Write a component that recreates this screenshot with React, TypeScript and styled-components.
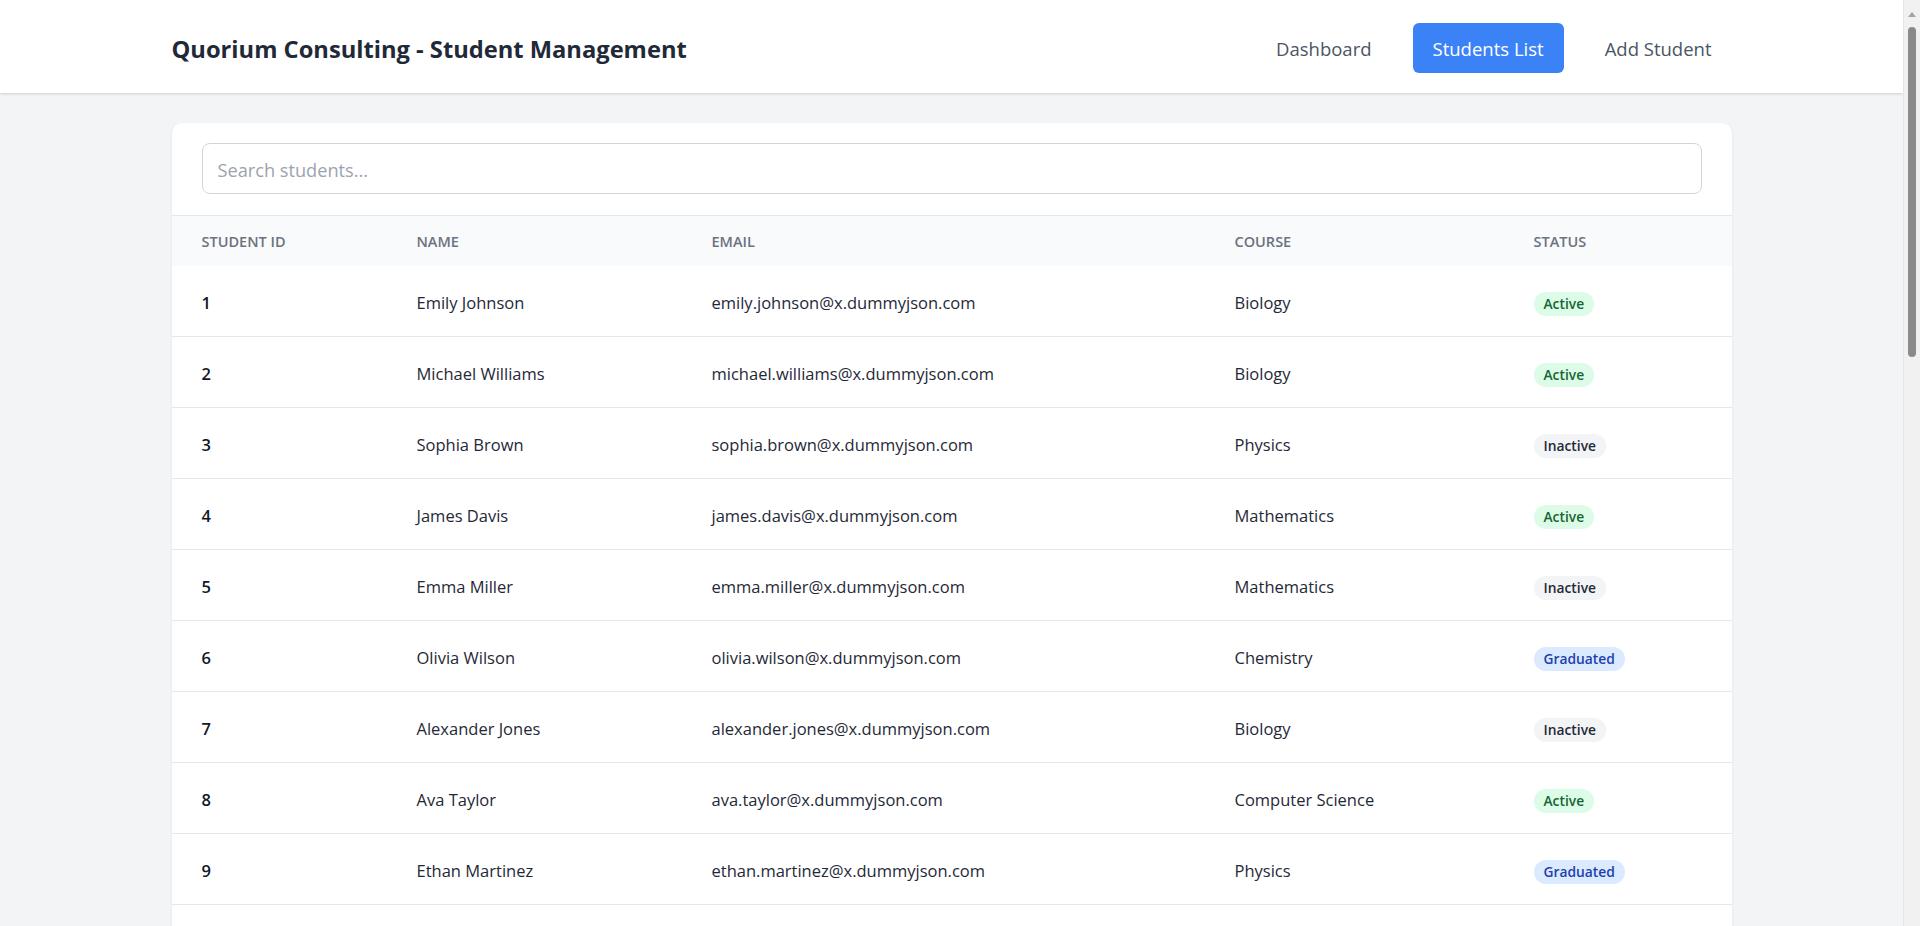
import React from 'react'
import styled, { createGlobalStyle } from 'styled-components'

const GlobalStyle = createGlobalStyle`
  * { box-sizing: border-box; }
  body {
    margin: 0;
    padding-right: 17px;
    background: #f3f4f6;
    font-family: "Open Sans", "Noto Sans", sans-serif;
    color: #1f2937;
  }
`

// stands in for the browser's vertical scrollbar seen in the screenshot
const ScrollTrack = styled.div`
  position: fixed;
  top: 0;
  right: 0;
  bottom: 0;
  width: 17px;
  background: #f1f1f1;
  border-left: 1px solid #e6e6e6;
`

const ScrollThumb = styled.div`
  position: absolute;
  top: 27px;
  left: 4px;
  width: 8px;
  height: 330px;
  border-radius: 4px;
  background: #8a8a8a;
`

const ScrollArrow = styled.div`
  position: absolute;
  top: 12px;
  left: 4px;
  width: 0;
  height: 0;
  border-left: 4.5px solid transparent;
  border-right: 4.5px solid transparent;
  border-bottom: 5px solid #a3a3a3;
`

const Header = styled.header`
  background: #ffffff;
  box-shadow: 0 1px 3px rgba(0, 0, 0, 0.1), 0 1px 2px rgba(0, 0, 0, 0.06);
`

const HeaderInner = styled.div`
  max-width: 1560px;
  margin: 0 auto;
  height: 93px;
  display: flex;
  align-items: center;
  justify-content: space-between;
`

const Title = styled.h1`
  margin: 0;
  font-size: 23.7px;
  font-weight: 700;
  color: #1f2937;
  padding-top: 5px;
`

const Nav = styled.nav`
  display: flex;
  gap: 21px;
  align-items: center;
  padding-top: 3px;
`

const NavLink = styled.a<{ $active?: boolean }>`
  display: block;
  padding: 1px 20px 0;
  height: 50px;
  line-height: 49px;
  border-radius: 6px;
  font-size: 18.5px;
  text-decoration: none;
  cursor: pointer;
  color: ${p => (p.$active ? '#ffffff' : '#4b5563')};
  background: ${p => (p.$active ? '#3b82f6' : 'transparent')};
`

const Main = styled.main`
  max-width: 1560px;
  margin: 30px auto;
`

const Card = styled.div`
  background: #ffffff;
  border-radius: 10px;
  box-shadow: 0 1px 3px rgba(0, 0, 0, 0.08);
  overflow: hidden;
`

const SearchWrap = styled.div`
  padding: 20px 30px 21px;
`

const SearchInput = styled.input`
  width: 100%;
  height: 51px;
  padding: 2px 15px 0;
  border: 1px solid #d1d5db;
  border-radius: 8px;
  font-family: inherit;
  font-size: 18.2px;
  color: #1f2937;
  outline: none;
  &::placeholder { color: #9ca3af; }
`

const Table = styled.table`
  width: 100%;
  border-collapse: collapse;
  table-layout: fixed;
  border-top: 1px solid #e5e7eb;
`

const Th = styled.th`
  height: 50px;
  padding: 2px 30px 0;
  text-align: left;
  font-size: 14.5px;
  font-weight: 600;
  text-transform: uppercase;
  color: #6b7280;
  background: #f9fafb;
`

const Td = styled.td<{ $bold?: boolean }>`
  padding: 22px 30px 18px;
  line-height: 30px;
  font-size: 16.5px;
  border-bottom: 1px solid #e5e7eb;
  font-weight: ${p => (p.$bold ? 600 : 400)};
  color: ${p => (p.$bold ? '#111827' : '#1f2937')};
`

const badgeColors: Record<string, [string, string]> = {
  Active: ['#dcfce7', '#166534'],
  Inactive: ['#f3f4f6', '#1f2937'],
  Graduated: ['#dbeafe', '#1e40af'],
}

const Badge = styled.span<{ $status: string }>`
  display: inline-block;
  height: 24px;
  line-height: 24px;
  padding: 0 10px;
  border-radius: 12px;
  font-size: 13.8px;
  font-weight: 600;
  vertical-align: middle;
  background: ${p => badgeColors[p.$status][0]};
  color: ${p => badgeColors[p.$status][1]};
`

const students = [
  { id: 1, name: 'Emily Johnson', course: 'Biology', status: 'Active' },
  { id: 2, name: 'Michael Williams', course: 'Biology', status: 'Active' },
  { id: 3, name: 'Sophia Brown', course: 'Physics', status: 'Inactive' },
  { id: 4, name: 'James Davis', course: 'Mathematics', status: 'Active' },
  { id: 5, name: 'Emma Miller', course: 'Mathematics', status: 'Inactive' },
  { id: 6, name: 'Olivia Wilson', course: 'Chemistry', status: 'Graduated' },
  { id: 7, name: 'Alexander Jones', course: 'Biology', status: 'Inactive' },
  { id: 8, name: 'Ava Taylor', course: 'Computer Science', status: 'Active' },
  { id: 9, name: 'Ethan Martinez', course: 'Physics', status: 'Graduated' },
  { id: 10, name: 'Isabella Anderson', course: 'Chemistry', status: 'Active' },
  { id: 11, name: 'Liam Garcia', course: 'Computer Science', status: 'Inactive' },
  { id: 12, name: 'Mia Rodriguez', course: 'Mathematics', status: 'Active' },
]

const emailOf = (name: string) => name.toLowerCase().replace(' ', '.') + '@x.dummyjson.com'

const App = () => {
  return (
    <>
      <GlobalStyle />
      <Header>
        <HeaderInner>
          <Title>Quorium Consulting - Student Management</Title>
          <Nav>
            <NavLink>Dashboard</NavLink>
            <NavLink $active>Students List</NavLink>
            <NavLink>Add Student</NavLink>
          </Nav>
        </HeaderInner>
      </Header>
      <Main>
        <Card>
          <SearchWrap>
            <SearchInput placeholder="Search students..." />
          </SearchWrap>
          <Table>
            <colgroup>
              <col style={{ width: 215 }} />
              <col style={{ width: 295 }} />
              <col style={{ width: 523 }} />
              <col style={{ width: 299 }} />
              <col style={{ width: 228 }} />
            </colgroup>
            <thead>
              <tr>
                <Th>Student ID</Th>
                <Th>Name</Th>
                <Th>Email</Th>
                <Th>Course</Th>
                <Th>Status</Th>
              </tr>
            </thead>
            <tbody>
              {students.map(s => (
                <tr key={s.id}>
                  <Td $bold>{s.id}</Td>
                  <Td>{s.name}</Td>
                  <Td>{emailOf(s.name)}</Td>
                  <Td>{s.course}</Td>
                  <Td>
                    <Badge $status={s.status}>{s.status}</Badge>
                  </Td>
                </tr>
              ))}
            </tbody>
          </Table>
        </Card>
      </Main>
      <ScrollTrack>
        <ScrollArrow />
        <ScrollThumb />
      </ScrollTrack>
    </>
  )
}

export default App
